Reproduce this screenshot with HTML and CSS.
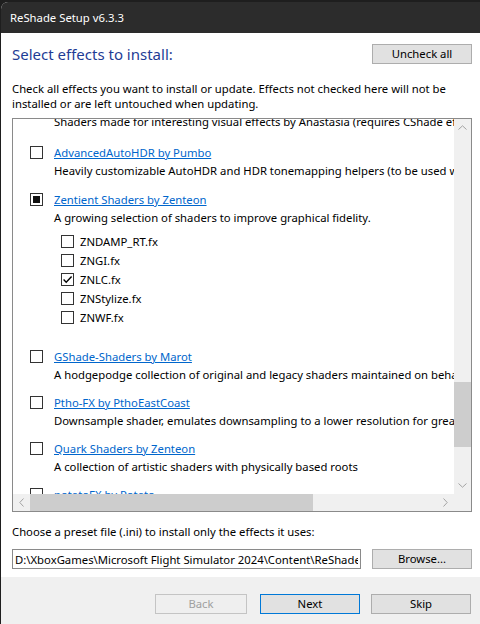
FILE: index.html
```html
<!DOCTYPE html>
<html lang="en">
<head>
<meta charset="utf-8">
<title>ReShade Setup</title>
<link rel="stylesheet" href="styles.css">
</head>
<body>
<div class="window">
  <div class="titlebar">ReShade Setup v6.3.3</div>
  <div class="main">
    <div class="header">
      <h1 class="instruction">Select effects to install:</h1>
      <button class="btn">Uncheck all</button>
    </div>
    <p class="desc">Check all effects you want to install or update. Effects not checked here will not be installed or are left untouched when updating.</p>
    <div class="listbox">
      <div class="viewport">
        <div class="scroll-content">
          <div class="item partial">
            <div class="item-desc">Shaders made for interesting visual effects by Anastasia (requires CShade effects)</div>
          </div>
          <div class="item">
            <div class="item-head"><span class="cb"></span><a class="link">AdvancedAutoHDR by Pumbo</a></div>
            <div class="item-desc">Heavily customizable AutoHDR and HDR tonemapping helpers (to be used with the RenoDX add-on)</div>
          </div>
          <div class="item">
            <div class="item-head"><span class="cb"><span class="cb-mixed"></span></span><a class="link">Zentient Shaders by Zenteon</a></div>
            <div class="item-desc">A growing selection of shaders to improve graphical fidelity.</div>
            <div class="sublist">
              <div class="sub"><span class="cb"></span>ZNDAMP_RT.fx</div>
              <div class="sub"><span class="cb"></span>ZNGI.fx</div>
              <div class="sub"><span class="cb"><svg class="check" width="11" height="11" viewBox="0 0 11 11"><path d="M1.6 5.6 L4.2 8.2 L9.6 2.6" fill="none" stroke="#000" stroke-width="1.4"/></svg></span>ZNLC.fx</div>
              <div class="sub"><span class="cb"></span>ZNStylize.fx</div>
              <div class="sub"><span class="cb"></span>ZNWF.fx</div>
            </div>
          </div>
          <div class="item compact">
            <div class="item-head"><span class="cb"></span><a class="link">GShade-Shaders by Marot</a></div>
            <div class="item-desc">A hodgepodge collection of original and legacy shaders maintained on behalf of GShade users</div>
          </div>
          <div class="item compact">
            <div class="item-head"><span class="cb"></span><a class="link">Ptho-FX by PthoEastCoast</a></div>
            <div class="item-desc">Downsample shader, emulates downsampling to a lower resolution for greater performance</div>
          </div>
          <div class="item compact">
            <div class="item-head"><span class="cb"></span><a class="link">Quark Shaders by Zenteon</a></div>
            <div class="item-desc">A collection of artistic shaders with physically based roots</div>
          </div>
          <div class="item compact">
            <div class="item-head"><span class="cb"></span><a class="link">potatoFX by Potato</a></div>
            <div class="item-desc">A collection of shaders</div>
          </div>
        </div>
      </div>
      <div class="vscroll">
        <div class="arrow"><svg width="9" height="5" viewBox="0 0 9 5"><path d="M0.5 4.5 L4.5 0.8 L8.5 4.5" fill="none" stroke="#a3a3a3" stroke-width="1"/></svg></div>
        <div class="vtrack"><div class="vthumb"></div></div>
        <div class="arrow"><svg width="9" height="5" viewBox="0 0 9 5"><path d="M0.5 0.5 L4.5 4.2 L8.5 0.5" fill="none" stroke="#a3a3a3" stroke-width="1"/></svg></div>
      </div>
      <div class="hscroll">
        <div class="harrow"><svg width="5" height="9" viewBox="0 0 5 9"><path d="M4.5 0.5 L0.8 4.5 L4.5 8.5" fill="none" stroke="#a3a3a3" stroke-width="1"/></svg></div>
        <div class="htrack"><div class="hthumb"></div></div>
        <div class="harrow"><svg width="5" height="9" viewBox="0 0 5 9"><path d="M0.5 0.5 L4.2 4.5 L0.5 8.5" fill="none" stroke="#a3a3a3" stroke-width="1"/></svg></div>
      </div>
      <div class="corner"></div>
    </div>
    <div class="preset-label">Choose a preset file (.ini) to install only the effects it uses:</div>
    <div class="preset-row">
      <input class="field" type="text" readonly value="D:\XboxGames\Microsoft Flight Simulator 2024\Content\ReShade\ReShadePreset.ini">
      <button class="btn">Browse...</button>
    </div>
  </div>
  <div class="footer">
    <button class="btn btn-disabled btn-back" disabled>Back</button>
    <button class="btn btn-default">Next</button>
    <button class="btn btn-skip">Skip</button>
  </div>
</div>
</body>
</html>
```

FILE: styles.css
```css
* { box-sizing: border-box; }

html, body {
  margin: 0;
  height: 100%;
}

body {
  background: #1e1e1e;
  padding: 2px 0 0 1px;
  font-family: "Noto Sans", "Open Sans", sans-serif;
  font-size: 11.3px;
  color: #000;
  overflow: hidden;
}

.window {
  width: 479px;
  height: 622px;
  background: #fff;
  border-top-left-radius: 7px;
  overflow: hidden;
  display: flex;
  flex-direction: column;
}

.titlebar {
  height: 31px;
  flex: none;
  background: #2c2c2c;
  color: #fff;
  padding-left: 9px;
  display: flex;
  align-items: center;
}

.main {
  flex: 1;
  padding: 11px 8px 0 11px;
  display: flex;
  flex-direction: column;
}

.header {
  display: flex;
  justify-content: space-between;
  align-items: center;
  height: 20px;
}

.instruction {
  margin: 0;
  font-size: 15px;
  font-weight: normal;
  color: #1e3c95;
  line-height: 20px;
}

.btn {
  font: inherit;
  height: 20px;
  width: 100px;
  background: #e1e1e1;
  border: 1px solid #adadad;
  padding: 0;
  color: #000;
  line-height: 18px;
  flex: none;
}

.desc {
  margin: 17px 0 0;
  line-height: 15px;
}

.listbox {
  margin-top: 7px;
  height: 394px;
  border: 1px solid #8a8a8a;
  display: grid;
  grid-template-columns: 1fr 17px;
  grid-template-rows: 1fr 17px;
}

.viewport {
  overflow: hidden;
  min-width: 0;
}

.scroll-content {
  margin-top: -4px;
  white-space: nowrap;
}

.item {
  padding-bottom: 10px;
}

.item.compact {
  padding-bottom: 9px;
}

.item.partial .item-desc {
  line-height: 14px;
}

.item-head {
  height: 19px;
  display: flex;
  align-items: center;
  padding-left: 17px;
}

.cb {
  width: 13px;
  height: 13px;
  border: 1px solid #333;
  background: #fff;
  flex: none;
  margin-right: 11px;
  display: flex;
  align-items: center;
  justify-content: center;
}

.cb-mixed {
  width: 7px;
  height: 7px;
  background: #111;
}

.link {
  color: #0066cc;
  text-decoration: underline;
}

.item-desc {
  height: 18px;
  line-height: 18px;
  padding-left: 41px;
}

.sublist {
  padding-top: 5px;
  padding-bottom: 10px;
}

.sub {
  height: 19px;
  display: flex;
  align-items: center;
  padding-left: 48px;
}

.sub .cb {
  margin-right: 6px;
}

.vscroll {
  background: #f0f0f0;
  display: flex;
  flex-direction: column;
}

.arrow {
  height: 17px;
  flex: none;
  display: flex;
  align-items: center;
  justify-content: center;
}

.vtrack {
  flex: 1;
}

.vthumb {
  margin-top: 246px;
  height: 65px;
  background: #cdcdcd;
}

.hscroll {
  background: #f0f0f0;
  display: flex;
}

.harrow {
  width: 17px;
  flex: none;
  display: flex;
  align-items: center;
  justify-content: center;
}

.htrack {
  flex: 1;
  display: flex;
}

.hthumb {
  width: 283px;
  background: #cdcdcd;
}

.corner {
  background: #f0f0f0;
}

.preset-label {
  margin-top: 12px;
  line-height: 16px;
}

.preset-row {
  margin-top: 9px;
  display: flex;
  gap: 11px;
}

.field {
  flex: 1;
  min-width: 0;
  height: 20px;
  border: 1px solid #8a8a8a;
  padding: 0 2px;
  font: inherit;
  color: #000;
  background: #fff;
  outline: none;
}

.footer {
  height: 47px;
  flex: none;
  background: #f0f0f0;
  display: flex;
  justify-content: flex-end;
  align-items: flex-start;
  padding: 17px 9px 0 0;
}

.btn-back {
  width: 92px;
  margin-right: 13px;
}

.btn-disabled {
  background: #efefef;
  border-color: #c4c4c4;
  color: #a0a0a0;
}

.btn-default {
  border-color: #0078d7;
  margin-right: 11px;
}
```
